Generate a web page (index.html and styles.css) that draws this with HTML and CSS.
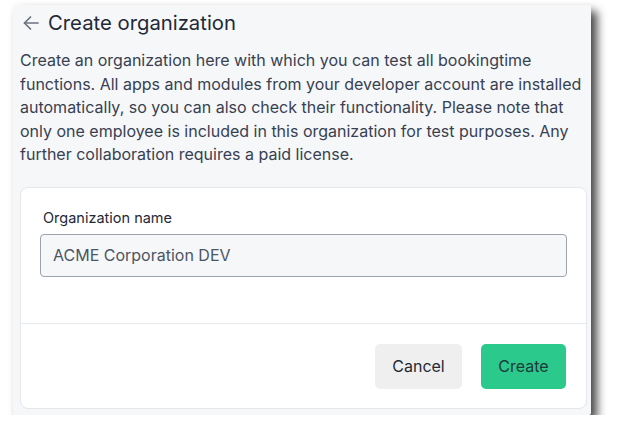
FILE: index.html
```html
<!DOCTYPE html>
<html lang="en">
<head>
<meta charset="utf-8">
<title>Create organization</title>
<link rel="stylesheet" href="styles.css">
</head>
<body>
<div class="panel">
  <div class="header">
    <svg class="back" width="16" height="16" viewBox="0 0 16 16" fill="none" stroke="currentColor" stroke-width="1.7" stroke-linecap="round" stroke-linejoin="round">
      <path d="M15 8H1.5"/>
      <path d="M7.5 2L1.5 8L7.5 14"/>
    </svg>
    <h1 class="title">Create organization</h1>
  </div>
  <p class="intro">Create an organization here with which you can test all bookingtime functions. All apps and modules from your developer account are installed automatically, so you can also check their functionality. Please note that only one employee is included in this organization for test purposes. Any further collaboration requires a paid license.</p>
  <div class="card">
    <div class="card-body">
      <label class="label" for="orgname">Organization name</label>
      <input class="input" id="orgname" type="text" value="ACME Corporation DEV">
    </div>
    <div class="card-footer">
      <button class="btn btn-cancel" type="button">Cancel</button>
      <button class="btn btn-create" type="button">Create</button>
    </div>
  </div>
</div>
</body>
</html>
```

FILE: styles.css
```css
* { box-sizing: border-box; }
html, body { margin: 0; padding: 0; background: #ffffff; }
body {
  font-family: Inter, "Noto Sans", "Liberation Sans", sans-serif;
  color: #1f2937;
  padding: 5px 0 0 13px;
}
.panel {
  width: 578px;
  height: 410px;
  background: #f6f7f9;
  border-radius: 2px;
  box-shadow: 6px 6px 10px rgba(0, 0, 0, 0.72);
  padding: 3px 4px 6px 7px;
  display: flex;
  flex-direction: column;
}
.header {
  display: flex;
  align-items: center;
  gap: 9px;
  height: 30px;
  padding-left: 3px;
}
.back { color: #6b7280; flex: none; }
.title {
  margin: 0;
  font-size: 20.3px;
  font-weight: 400;
  line-height: 28px;
  color: #1f2937;
}
.intro {
  margin: 11px 0 0 0;
  font-size: 16px;
  line-height: 23.5px;
  color: #374151;
}
.card {
  margin-top: 20px;
  flex: 1;
  background: #ffffff;
  border: 1px solid #e5e7eb;
  border-radius: 8px;
  display: flex;
  flex-direction: column;
}
.card-body {
  padding: 20px 19px 46px 19px;
  display: flex;
  flex-direction: column;
  border-bottom: 1px solid #e9eaee;
}
.label {
  font-size: 14.5px;
  line-height: 20px;
  color: #1f2937;
  padding-left: 3px;
  margin-bottom: 6px;
}
.input {
  height: 43px;
  width: 100%;
  border: 1px solid #9ca3af;
  border-radius: 4px;
  background: #f6f7f9;
  padding: 0 12px;
  font-family: inherit;
  font-size: 16px;
  color: #4b5563;
}
.card-footer {
  display: flex;
  justify-content: flex-end;
  gap: 19px;
  padding: 20px 20px 19px 19px;
}
.btn {
  height: 45px;
  border: none;
  border-radius: 5px;
  font-family: inherit;
  font-size: 16px;
  color: #1f2937;
  padding: 0 17px;
}
.btn-cancel { background: #efefef; width: 87px; }
.btn-create { background: #2bc98c; width: 85px; color: #1e3a3a; }
```
